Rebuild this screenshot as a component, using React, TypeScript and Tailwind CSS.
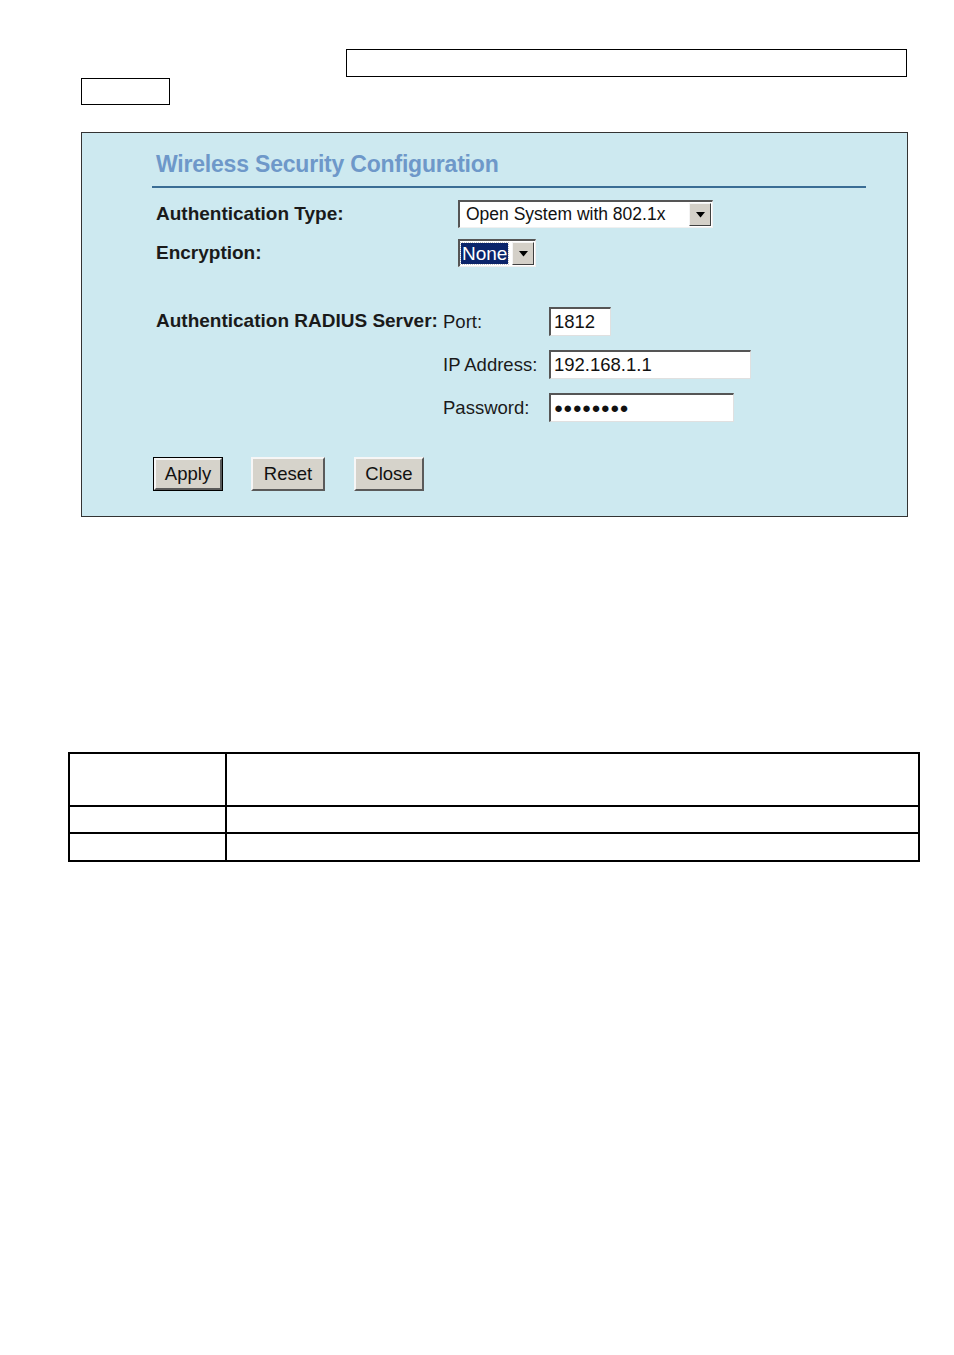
import React from "react";

const Arrow = () => (
  <div className="flex h-full w-[22px] items-center justify-center bg-[#d4d0c8] border-t border-l border-t-[#f4f4f4] border-l-[#f4f4f4] border-r border-b border-r-[#404040] border-b-[#404040]">
    <svg width="9" height="6" viewBox="0 0 9 6">
      <path d="M0 0 H9 L4.5 5.5 Z" fill="#000" />
    </svg>
  </div>
);

const Btn = ({ label, def, w }: { label: string; def?: boolean; w: string }) => (
  <div className={`${def ? "border border-black" : ""} h-[34px] ${w}`}>
    <div className="flex h-full w-full items-center justify-center bg-[#d6d3cb] border-t-2 border-l-2 border-t-[#f6f6f6] border-l-[#f6f6f6] border-r-2 border-b-2 border-r-[#5a5a5a] border-b-[#5a5a5a] text-[18.5px] text-[#111]">
      {label}
    </div>
  </div>
);

const Input = ({ w, children }: { w: string; children?: React.ReactNode }) => (
  <div className={`${w} h-[29px] bg-white border-t-2 border-l-2 border-t-[#555] border-l-[#555] border-r border-b border-r-[#e0e0e0] border-b-[#e0e0e0] flex items-center pl-[3px] text-[18.5px] text-[#111]`}>
    {children}
  </div>
);

export default function App() {
  return (
    <div className="w-[954px] h-[1355px] bg-white flex flex-col" style={{ fontFamily: '"Liberation Sans", Arial, sans-serif' }}>
      <div className="mt-[49px] ml-[346px] w-[561px] h-[28px] border-[1.5px] border-black" />
      <div className="mt-[1px] ml-[81px] w-[89px] h-[27px] border-[1.5px] border-black" />
      <div className="mt-[27px] ml-[81px] w-[827px] h-[385px] border border-[#333] bg-[#cde9f0] flex flex-col pl-[70px]">
        <div className="pt-[18px] pl-[4px] h-[42px] leading-[26px] text-[23px] font-bold text-[#6e98c9] tracking-[-0.2px]">
          Wireless Security Configuration
        </div>
        <div className="mt-[11px] w-[714px] h-[2px] bg-[#3a6d95]" />
        <div className="mt-[12px] flex items-center h-[28px]">
          <div className="w-[306px] pl-[4px] text-[19px] font-bold text-[#1a1a1a] whitespace-nowrap">Authentication Type:</div>
          <div className="flex h-[28px] w-[255px] bg-white border-t-2 border-l-2 border-t-[#555] border-l-[#555] border-r border-b border-r-[#f0f0f0] border-b-[#f0f0f0] p-[1px]">
            <div className="flex-1 flex items-center pl-[5px] text-[17.5px] text-[#111] whitespace-nowrap">Open System with 802.1x</div>
            <Arrow />
          </div>
        </div>
        <div className="mt-[11px] flex items-center h-[28px]">
          <div className="w-[306px] pl-[4px] text-[19px] font-bold text-[#1a1a1a]">Encryption:</div>
          <div className="flex h-[28px] w-[78px] bg-white border-t-2 border-l-2 border-t-[#555] border-l-[#555] border-r border-b border-r-[#f0f0f0] border-b-[#f0f0f0] p-[1px]">
            <div className="flex-1 flex items-center">
              <span className="bg-[#0a246a] text-white text-[19px] leading-[21px] px-[1px] outline outline-1 outline-dotted outline-[#c0c0c0]">None</span>
            </div>
            <Arrow />
          </div>
        </div>
        <div className="mt-[40px] flex items-center h-[29px]">
          <div className="w-[291px] pl-[4px] text-[19px] font-bold text-[#1a1a1a] whitespace-nowrap">Authentication RADIUS Server:</div>
          <div className="w-[106px] text-[18.5px] text-[#1a1a1a]">Port:</div>
          <Input w="w-[62px]">1812</Input>
        </div>
        <div className="mt-[14px] flex items-center h-[29px]">
          <div className="w-[291px]" />
          <div className="w-[106px] text-[18.5px] text-[#1a1a1a]">IP Address:</div>
          <Input w="w-[202px]">192.168.1.1</Input>
        </div>
        <div className="mt-[14px] flex items-center h-[29px]">
          <div className="w-[291px]" />
          <div className="w-[106px] text-[18.5px] text-[#1a1a1a]">Password:</div>
          <Input w="w-[185px]">
            <span className="text-[15px] tracking-[0.3px] font-bold">●●●●●●●●</span>
          </Input>
        </div>
        <div className="mt-[35px] flex items-center pl-[1px]">
          <Btn label="Apply" def w="w-[70px]" />
          <div className="w-[28px]" />
          <Btn label="Reset" w="w-[74px]" />
          <div className="w-[29px]" />
          <Btn label="Close" w="w-[70px]" />
        </div>
      </div>
      <div className="mt-[235px] ml-[68px] w-[852px] border-2 border-black grid grid-cols-[157px_1fr]">
        <div className="h-[53px] border-r-2 border-b-2 border-black" />
        <div className="h-[53px] border-b-2 border-black" />
        <div className="h-[27px] border-r-2 border-b-2 border-black" />
        <div className="h-[27px] border-b-2 border-black" />
        <div className="h-[26px] border-r-2 border-black" />
        <div className="h-[26px]" />
      </div>
    </div>
  );
}
